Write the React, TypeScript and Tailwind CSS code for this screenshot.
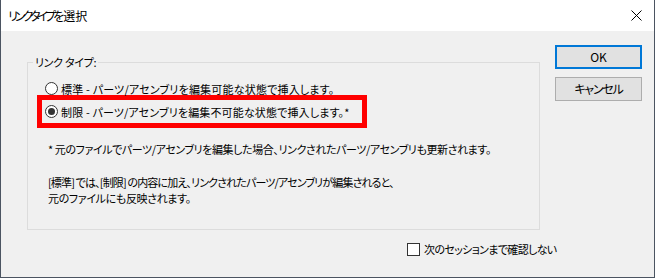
import React from "react";

const font = "font-['Noto_Sans_CJK_JP','Noto_Sans',sans-serif] [font-feature-settings:'palt']";

function Radio({ checked }: { checked?: boolean }) {
  return (
    <span className="w-[13px] h-[13px] rounded-full border border-[#333333] bg-white flex items-center justify-center shrink-0">
      {checked && <span className="w-[7px] h-[7px] rounded-full bg-[#333333]" />}
    </span>
  );
}

export default function App() {
  return (
    <div className={`w-[655px] h-[278px] border-x border-b border-[#4b5461] flex flex-col text-[11px] leading-[16px] text-black ${font}`}>
      <div className="h-[31px] bg-white flex items-center justify-between pl-[7px] pr-[12px] shrink-0">
        <span className="text-[12px] whitespace-nowrap">
          <span className="tracking-[-3px]">リンク タイプを</span>
          <span className="ml-[2px]">選択</span>
        </span>
        <svg width="11" height="11" viewBox="0 0 11 11" className="mb-[1px]">
          <path d="M0.5 0.5 L10.5 10.5 M10.5 0.5 L0.5 10.5" stroke="#000" strokeWidth="1" />
        </svg>
      </div>
      <div className="flex-1 bg-[#f0f0f0] flex flex-col">
        <div className="flex">
          <fieldset className="ml-[26px] mt-[23px] w-[513px] h-[176px] border border-[#dcdcdc]">
            <legend className="ml-[5px] px-[2px] whitespace-nowrap tracking-[-0.3px]">リンク タイプ:</legend>
            <div className="mt-[12px] ml-[17px] h-[13px] flex items-center gap-[3px] whitespace-nowrap">
              <Radio />
              <span className="tracking-[0.2px]">標準 - パーツ/アセンブリを編集可能な状態で挿入します。</span>
            </div>
            <div className="ml-[9px] w-[330px] h-[33px] border-[5px] border-[#ff0000] flex items-center pl-[3px] gap-[3px] whitespace-nowrap">
              <Radio checked />
              <span className="tracking-[0.15px]">制限 - パーツ/アセンブリを編集不可能な状態で挿入します。*</span>
            </div>
            <p className="mt-[13px] ml-[20px] whitespace-nowrap tracking-[-0.4px]">* 元のファイルでパーツ/アセンブリを編集した場合、リンクされたパーツ/アセンブリも更新されます。</p>
            <p className="mt-[17px] ml-[20px] whitespace-nowrap">
              <span className="tracking-[-0.85px]">[標準] では、[制限] の内容に加え、リンクされたパーツ/アセンブリが編集されると、</span>
              <br />
              <span className="tracking-[-0.35px]">元のファイルにも反映されます。</span>
            </p>
          </fieldset>
          <div className="ml-[15px] mt-[14px] flex flex-col text-[12px]">
            <button className="w-[87px] h-[24px] border-2 border-[#0078d7] bg-[#e1e1e1] flex items-center justify-center">OK</button>
            <button className="mt-[8px] w-[87px] h-[24px] border border-[#adadad] bg-[#e1e1e1] flex items-center justify-center tracking-[-1.2px]">キャンセル</button>
          </div>
        </div>
        <div className="mt-[11px] ml-[406px] flex items-center gap-[4px] whitespace-nowrap">
          <span className="w-[13px] h-[13px] border border-[#333333] bg-white shrink-0" />
          <span className="tracking-[-0.65px]">次のセッションまで確認しない</span>
        </div>
      </div>
    </div>
  );
}
